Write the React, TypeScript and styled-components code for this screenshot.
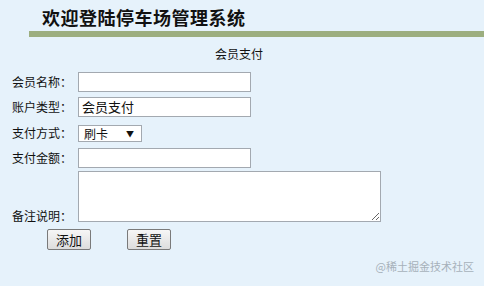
import React, {FC} from 'react';
import styled, {createGlobalStyle} from 'styled-components';

const GlobalStyle = createGlobalStyle`
  html, body {
    margin: 0;
    padding: 0;
    background: #e6f2fb;
  }
  body {
    font-family: "Noto Sans CJK SC", "Liberation Sans", sans-serif;
    color: #111;
  }
`

type TRow = {
    label: string
    height: number
    labelAlign?: 'center' | 'flex-end'
    children: React.ReactNode
}

const FormRow: FC<TRow> = ({label, height, labelAlign = 'center', children}) => (
    <Row $height={height}>
        <Label $align={labelAlign}>{label}</Label>
        {children}
    </Row>
)

export default function App() {
    return (
        <Page>
            <GlobalStyle/>
            <Header>
                <Title>欢迎登陆停车场管理系统</Title>
                <Bar/>
            </Header>
            <Caption>会员支付</Caption>
            <Form>
                <FormRow label="会员名称：" height={25}>
                    <TextInput $width={173}/>
                </FormRow>
                <FormRow label="账户类型：" height={25}>
                    <TextInput $width={173} defaultValue="会员支付"/>
                </FormRow>
                <FormRow label="支付方式：" height={28}>
                    <SelectBox>
                        <Select defaultValue="card">
                            <option value="card">刷卡</option>
                            <option value="cash">现金</option>
                        </Select>
                        <Arrow>▼</Arrow>
                    </SelectBox>
                </FormRow>
                <FormRow label="支付金额：" height={22}>
                    <TextInput $width={173}/>
                </FormRow>
                <FormRow label="备注说明：" height={55} labelAlign="flex-end">
                    <TextArea/>
                </FormRow>
                <Buttons>
                    <Button type="button">添加</Button>
                    <Button type="button">重置</Button>
                </Buttons>
            </Form>
            <Watermark>@稀土掘金技术社区</Watermark>
        </Page>
    )
}

const Page = styled.div`
  position: relative;
  width: 484px;
  height: 286px;
  overflow: hidden;
`

const Header = styled.div`
  padding: 5px 0 0 29px;
`

const Title = styled.h1`
  margin: 0 0 0 13px;
  height: 26px;
  font-size: 18px;
  line-height: 24px;
  font-weight: 700;
  letter-spacing: 0.5px;
  color: #111;
`

const Bar = styled.div`
  height: 6px;
  background-color: #9cae7f;
`

const Caption = styled.p`
  margin: 9px 0 0 0;
  text-align: center;
  font-size: 12px;
  line-height: 16px;
  padding-right: 6px;
`

const Form = styled.div`
  padding: 7px 0 0 12px;
`

const Row = styled.div<{ $height: number }>`
  display: flex;
  align-items: center;
  height: ${({$height}) => $height}px;
`

const Label = styled.span<{ $align: string }>`
  width: 66px;
  align-self: ${({$align}) => $align};
  font-size: 12px;
  line-height: 16px;
  white-space: nowrap;
`

const TextInput = styled.input<{ $width: number }>`
  box-sizing: border-box;
  width: ${({$width}) => $width}px;
  height: 20px;
  margin: 0;
  padding: 0 3px;
  border: 1px solid #a3a9b0;
  background: #fff;
  font-family: "Noto Sans CJK SC", sans-serif;
  font-size: 13px;
  color: #111;
  outline: none;
`

const SelectBox = styled.div`
  position: relative;
  display: flex;
  width: 64px;
  height: 17px;
`

const Select = styled.select`
  appearance: none;
  display: block;
  box-sizing: border-box;
  width: 100%;
  height: 17px;
  margin: 0;
  padding: 0 0 0 5px;
  border: 1px solid #a3a9b0;
  border-radius: 0;
  background: #fff;
  font-family: "Noto Sans CJK SC", sans-serif;
  font-size: 12px;
  line-height: 15px;
  color: #111;
  outline: none;
`

const Arrow = styled.span`
  position: absolute;
  right: 8px;
  top: 2px;
  font-size: 8px;
  line-height: 13px;
  color: #111;
  pointer-events: none;
`

const TextArea = styled.textarea`
  box-sizing: border-box;
  width: 303px;
  height: 51px;
  margin: 0;
  border: 1px solid #a3a9b0;
  background: #fff;
  outline: none;
`

const Buttons = styled.div`
  display: flex;
  gap: 36px;
  padding: 5px 0 0 35px;
`

const Button = styled.button`
  box-sizing: border-box;
  height: 21px;
  padding: 0 8px;
  border: 1px solid #7a7a7a;
  border-radius: 2px;
  background: linear-gradient(#f6f6f6, #dddddd);
  font-family: "Noto Sans CJK SC", sans-serif;
  font-size: 13px;
  line-height: 18px;
  color: #111;
`

const Watermark = styled.span`
  position: absolute;
  right: 10px;
  bottom: 13px;
  font-size: 11px;
  line-height: 14px;
  color: #a7b1ba;
`
